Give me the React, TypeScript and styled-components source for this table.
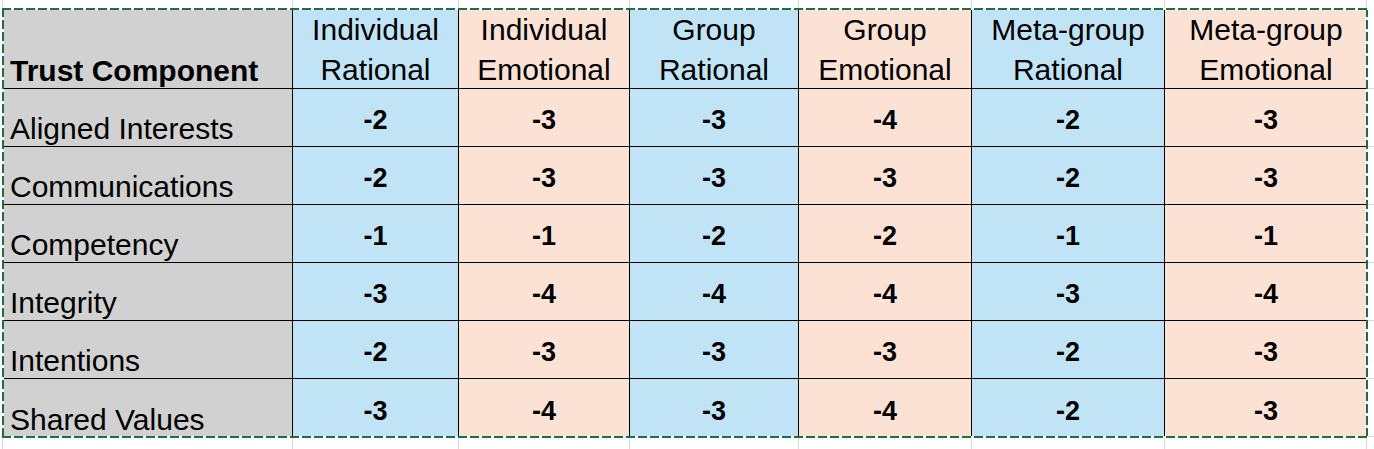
import React from 'react';
import styled, { createGlobalStyle, css } from 'styled-components';

type Tone = 'blue' | 'peach';

const GRID_LINE = '#dadada';
const ANTS = '#1d6e41';

const tones: Record<Tone, string> = {
  blue: '#c0e4f5',
  peach: '#fbe2d5'
};

// widths of the spreadsheet columns A..G, as Excel drew them
const colWidths = [290, 166, 171, 169, 173, 193, 202];
const rowHeights = [80, 58, 58, 58, 58, 58, 58];

const columns: { top: string; bottom: string; tone: Tone }[] = [
  { top: 'Individual', bottom: 'Rational', tone: 'blue' },
  { top: 'Individual', bottom: 'Emotional', tone: 'peach' },
  { top: 'Group', bottom: 'Rational', tone: 'blue' },
  { top: 'Group', bottom: 'Emotional', tone: 'peach' },
  { top: 'Meta-group', bottom: 'Rational', tone: 'blue' },
  { top: 'Meta-group', bottom: 'Emotional', tone: 'peach' }
];

const rows: { label: string; values: number[] }[] = [
  { label: 'Aligned Interests', values: [-2, -3, -3, -4, -2, -3] },
  { label: 'Communications', values: [-2, -3, -3, -3, -2, -3] },
  { label: 'Competency', values: [-1, -1, -2, -2, -1, -1] },
  { label: 'Integrity', values: [-3, -4, -4, -4, -3, -4] },
  { label: 'Intentions', values: [-2, -3, -3, -3, -2, -3] },
  { label: 'Shared Values', values: [-3, -4, -3, -4, -2, -3] }
];

const GlobalStyle = createGlobalStyle`
  html, body {
    margin: 0;
    padding: 0;
    background: #ffffff;
  }
  body {
    font-family: "Liberation Sans", Arial, sans-serif;
    color: #000000;
  }
`;

const Sheet = styled.div`
  width: 1374px;
  height: 449px;
  display: flex;
  flex-direction: column;
  overflow: hidden;
  background: #ffffff;
`;

// strips of empty sheet cells above and below the selection
const Strip = styled.div<{ $height: number }>`
  display: grid;
  grid-template-columns: 3px ${colWidths.map((w) => `${w}px`).join(' ')} 1fr;
  height: ${({ $height }) => $height}px;
  flex: ${({ $height }) => ($height ? 'none' : '1')};
`;

const StripCell = styled.div<{ $last?: boolean }>`
  border-right: ${({ $last }) => ($last ? 'none' : `1px solid ${GRID_LINE}`)};
`;

const Middle = styled.div`
  display: flex;
`;

const Gutter = styled.div`
  width: 3px;
  flex: none;
`;

const RightStrip = styled.div`
  flex: 1;
  display: flex;
  flex-direction: column;
`;

const RightCell = styled.div<{ $height: number }>`
  height: ${({ $height }) => $height}px;
  box-sizing: border-box;
  border-bottom: 1px solid ${GRID_LINE};
`;

const dashes = (deg: number) =>
  `repeating-linear-gradient(${deg}deg, ${ANTS} 0 9px, #ffffff 9px 12px)`;

const Table = styled.div`
  position: relative;
  display: grid;
  grid-template-columns: ${colWidths
    .map((w, i) => `${i < colWidths.length - 1 ? w - 1 : w}px`)
    .join(' ')};
  grid-template-rows: 79px repeat(5, 57px) 58px;
  gap: 1px;
  background: #000000;
  flex: none;

  /* the copy marquee Excel draws round a selection */
  &::after {
    content: '';
    position: absolute;
    inset: -1px -1px -1px -1px;
    pointer-events: none;
    background:
      ${dashes(90)} left top / 100% 2px no-repeat,
      ${dashes(90)} left bottom / 100% 2px no-repeat,
      ${dashes(180)} left top / 2px 100% no-repeat,
      ${dashes(180)} right top / 2px 100% no-repeat;
  }
`;

const cellBase = css`
  display: flex;
  min-width: 0;
  overflow: hidden;
  white-space: nowrap;
`;

const CornerCell = styled.div`
  ${cellBase};
  background: #d1d1d1;
  align-items: flex-end;
  padding: 0 0 0 7px;
  font-size: 30px;
  font-weight: 700;
  line-height: 34px;
`;

const HeaderCell = styled.div<{ $tone: Tone }>`
  ${cellBase};
  flex-direction: column;
  justify-content: flex-end;
  align-items: center;
  background: ${({ $tone }) => tones[$tone]};
  font-size: 30px;
  line-height: 40px;

  & > span:last-child {
    margin-bottom: -2px;
  }
`;

const LabelCell = styled.div`
  ${cellBase};
  background: #d1d1d1;
  align-items: flex-end;
  padding: 0 0 0 7px;
  font-size: 30px;
`;

const ValueCell = styled.div<{ $tone: Tone }>`
  ${cellBase};
  align-items: center;
  justify-content: center;
  padding-top: 6px;
  box-sizing: border-box;
  background: ${({ $tone }) => tones[$tone]};
  font-size: 27px;
  font-weight: 700;
`;

const SheetStrip = ({ height }: { height: number }) => (
  <Strip $height={height}>
    <StripCell />
    {colWidths.map((w, i) => (
      <StripCell key={i} />
    ))}
    <StripCell $last />
  </Strip>
);

const App = () => {
  return (
    <>
      <GlobalStyle />
      <Sheet>
        <SheetStrip height={9} />
        <Middle>
          <Gutter />
          <Table>
            <CornerCell>Trust Component</CornerCell>
            {columns.map((c, i) => (
              <HeaderCell key={i} $tone={c.tone}>
                <span>{c.top}</span>
                <span>{c.bottom}</span>
              </HeaderCell>
            ))}
            {rows.map((r) => (
              <React.Fragment key={r.label}>
                <LabelCell>{r.label}</LabelCell>
                {r.values.map((v, i) => (
                  <ValueCell key={i} $tone={columns[i].tone}>
                    {v}
                  </ValueCell>
                ))}
              </React.Fragment>
            ))}
          </Table>
          <RightStrip>
            {rowHeights.map((h, i) => (
              <RightCell key={i} $height={h} />
            ))}
          </RightStrip>
        </Middle>
        <SheetStrip height={0} />
      </Sheet>
    </>
  );
};

export default App;
